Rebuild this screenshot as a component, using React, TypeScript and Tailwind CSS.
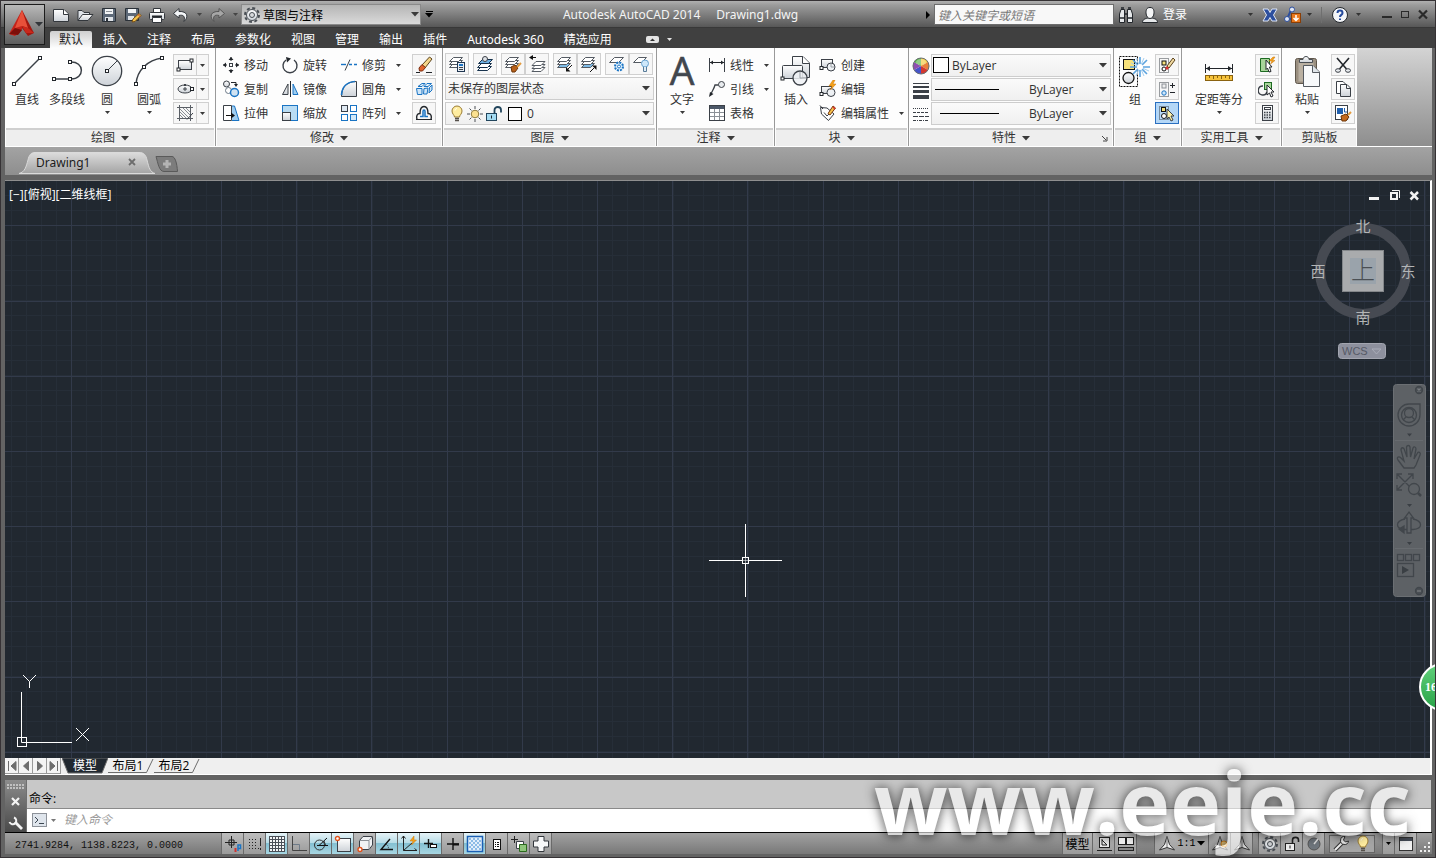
import type { ReactNode } from "react";
import clsx from "clsx";

type IconProps = { w?: number; h?: number; children: ReactNode };

// Base wrapper for every hand drawn icon
function Svg({ w = 18, h = 18, children }: IconProps) {
  return (
    <svg
      width={w}
      height={h}
      viewBox={`0 0 ${w} ${h}`}
      fill="none"
      stroke="#3b4047"
      className="shrink-0"
      aria-hidden="true"
    >
      {children}
    </svg>
  );
}

function Node({ x, y }: { x: number; y: number }) {
  return <rect x={x - 1.5} y={y - 1.5} width="3" height="3" fill="#fff" stroke="#22262b" />;
}

function Caret({ big = false, color = "#3a3a3a" }: { big?: boolean; color?: string }) {
  return big ? (
    <svg width="8" height="5" viewBox="0 0 8 5" className="shrink-0" aria-hidden="true">
      <path d="M0 0H8L4 4.5Z" fill={color} />
    </svg>
  ) : (
    <svg width="5" height="3" viewBox="0 0 5 3" className="shrink-0" aria-hidden="true">
      <path d="M0 0H5L2.5 3Z" fill={color} />
    </svg>
  );
}

// ================= QUICK ACCESS ICONS =================
const NewIcon = (
  <Svg>
    <path d="M1.5 3.5H12L16.5 8V15.5H1.5Z" fill="url(#face)" stroke="#33373c" />
    <path d="M11.5 3.5V8.5H16.5" fill="#fff" stroke="#33373c" />
  </Svg>
);
const OpenIcon = (
  <Svg>
    <path d="M2 14.5V4.5H6L8 6.5H13.5V8.5" fill="#dfe3e8" stroke="#33373c" />
    <path d="M2 14.5L6.5 8.5H17L12 14.5Z" fill="url(#face)" stroke="#33373c" />
  </Svg>
);
const SaveIcon = (
  <Svg>
    <path d="M2.5 2.5H15.5V15.5H2.5Z" fill="#5d6978" stroke="#2b3138" />
    <path d="M5 3H13V8H5Z" fill="#f2f4f6" stroke="none" />
    <path d="M6 5.5H12" stroke="#8b9096" />
    <path d="M5 11H13V15H5Z" fill="#dfe3e8" stroke="none" />
    <path d="M6 12H8V15H6Z" fill="#2b3138" stroke="none" />
  </Svg>
);
const SaveAsIcon = (
  <Svg>
    <path d="M1.5 2.5H14.5V14.5H1.5Z" fill="#5d6978" stroke="#2b3138" />
    <path d="M4 3H12V7H4Z" fill="#f2f4f6" stroke="none" />
    <path d="M4 10H10V14H4Z" fill="#dfe3e8" stroke="none" />
    <path d="M8 16L9 13L15 7.5L17 9.5L11 15.5Z" fill="#f5c24a" stroke="#7a5014" />
    <path d="M14 8.5L16 10.5" stroke="#c33" />
  </Svg>
);
const PrintIcon = (
  <Svg>
    <path d="M5.5 7V2.5H12.5V7" fill="#fff" stroke="#33373c" />
    <rect x="1.5" y="6.5" width="15" height="7" rx="1" fill="url(#face)" stroke="#33373c" />
    <path d="M4 10.5H14" stroke="#22262b" strokeWidth="2" />
    <path d="M4.5 11.5H13.5V16.5H4.5Z" fill="#fff" stroke="#33373c" />
  </Svg>
);
const UndoIcon = (
  <Svg>
    <path d="M7 2.5L1.5 7.5L7 12V9.5C11 8.5 13.5 10 12 15.5C17 11 15.5 5 7 5.5Z" fill="#f4f6f8" stroke="#33373c" />
  </Svg>
);
const RedoIcon = (
  <Svg>
    <path d="M11 2.5L16.5 7.5L11 12V9.5C7 8.5 4.5 10 6 15.5C1 11 2.5 5 11 5.5Z" fill="#a6a6a6" stroke="#555" />
  </Svg>
);
const GearIcon = (
  <Svg>
    <circle cx="9" cy="9" r="7" stroke="#4a4f55" strokeWidth="2" strokeDasharray="3 2.5" />
    <circle cx="9" cy="9" r="5.5" fill="url(#face)" stroke="#4a4f55" />
    <circle cx="9" cy="9" r="2.5" fill="#d8dadd" stroke="#4a4f55" />
  </Svg>
);

// ================= DRAW PANEL ICONS =================
const LineIcon = (
  <Svg w={32} h={32}>
    <path d="M3 29L29 3" stroke="#3b4047" strokeWidth="1.4" />
    <Node x={3} y={29} />
    <Node x={29} y={3} />
  </Svg>
);
const PolylineIcon = (
  <Svg w={32} h={32}>
    <path d="M3 24H20C34 24 34 6 19 7" strokeWidth="1.5" />
    <Node x={3} y={24} />
    <Node x={19} y={24} />
    <Node x={19} y={7} />
  </Svg>
);
const CircleIcon = (
  <Svg w={32} h={32}>
    <circle cx="16" cy="16" r="14.7" fill="url(#face)" strokeWidth="1.3" />
    <path d="M16 16L26 6" />
    <Node x={16} y={16} />
  </Svg>
);
const ArcIcon = (
  <Svg w={32} h={32}>
    <path d="M3 29C4 15 15 5 29 3" strokeWidth="1.5" />
    <Node x={3} y={29} />
    <Node x={11} y={12} />
    <Node x={29} y={3} />
  </Svg>
);
const RectIcon = (
  <Svg>
    <rect x="2.5" y="4.5" width="13" height="9" fill="url(#face)" />
    <Node x={2.5} y={13.5} />
    <Node x={15.5} y={4.5} />
  </Svg>
);
const EllipseIcon = (
  <Svg>
    <ellipse cx="9" cy="9" rx="7" ry="4" fill="url(#face)" />
    <path d="M9 7V11M7 9H11" />
    <Node x={16} y={9} />
    <path d="M8 5H10" strokeWidth="2" />
  </Svg>
);
const HatchIcon = (
  <Svg>
    <path d="M1 3.5H17M1 14.5H17M3.5 1V17M14.5 1V17" stroke="#5a5f66" />
    <path d="M4 5L13 14M4 8L10 14M4 11L7 14M7 4L14 11M10 4L14 8" stroke="#888d93" />
    <path d="M11 15.5L17 9" stroke="#3b4047" />
  </Svg>
);

// ================= MODIFY PANEL ICONS =================
const MoveIcon = (
  <Svg>
    <path d="M9 5V1M9 13V17M5 9H1M13 9H17" stroke="#22262b" />
    <path d="M6.5 4H11.5L9 1ZM6.5 14H11.5L9 17ZM4 6.5V11.5L1 9ZM14 6.5V11.5L17 9Z" fill="#22262b" stroke="none" />
    <rect x="7.5" y="7.5" width="3" height="3" fill="#fff" />
  </Svg>
);
const RotateIcon = (
  <Svg>
    <path d="M5 4A7 7 0 1 0 13 4" strokeWidth="1.4" />
    <path d="M5 1L10 2.5L6 6.5Z" fill="#22262b" stroke="none" />
  </Svg>
);
const TrimIcon = (
  <Svg>
    <path d="M1 8.5H6" stroke="#1a74c4" strokeWidth="1.4" />
    <path d="M10 3.5L5 14.5" />
    <path d="M9 8.5H12M14 8.5H17" stroke="#1a74c4" strokeWidth="1.4" />
  </Svg>
);
const CopyObjIcon = (
  <Svg>
    <circle cx="4.5" cy="4" r="3" fill="url(#face)" />
    <circle cx="6.5" cy="10.5" r="3" fill="#fff" stroke="#6d7a88" />
    <circle cx="12.5" cy="12.5" r="4" fill="#cfe2f2" stroke="#1a74c4" strokeWidth="1.5" />
    <path d="M9 2.5H14V5" stroke="#22262b" />
    <path d="M12 4H16L14 7Z" fill="#22262b" stroke="none" />
  </Svg>
);
const MirrorIcon = (
  <Svg>
    <path d="M9.5 1V17" stroke="#22262b" />
    <path d="M7 4L1.5 14.5H7Z" fill="url(#face)" />
    <path d="M12 4L17 14.5H12Z" fill="#9fcdf0" stroke="#1a74c4" />
  </Svg>
);
const FilletIcon = (
  <Svg>
    <path d="M1.5 16.5C1.5 7 7 1.5 16.5 1.5V16.5Z" fill="url(#face)" />
    <path d="M1.5 15C2 7 7 2 15 1.5" stroke="#1a74c4" strokeWidth="1.6" />
  </Svg>
);
const StretchIcon = (
  <Svg>
    <path d="M1.5 1.5H9.5V16.5H1.5Z" fill="#fff" />
    <path d="M10 2H12.5L17 16.5H10" fill="#9fcdf0" stroke="#1a74c4" />
    <path d="M4 11.5H11" stroke="#111" />
    <path d="M9 8.5L13 11.5L9 14.5Z" fill="#111" stroke="none" />
  </Svg>
);
const ScaleIcon = (
  <Svg>
    <rect x="1.5" y="1.5" width="15" height="15" fill="#b9dcf3" stroke="#1a74c4" />
    <rect x="1.5" y="8.5" width="8" height="8" fill="url(#face)" />
  </Svg>
);
const ArrayIcon = (
  <Svg>
    <rect x="1.5" y="1.5" width="6" height="6" fill="#dfe9f2" />
    <rect x="10.5" y="1.5" width="6" height="6" fill="#fff" stroke="#1a74c4" />
    <rect x="1.5" y="10.5" width="6" height="6" fill="#fff" stroke="#1a74c4" />
    <rect x="10.5" y="10.5" width="6" height="6" fill="#d2e8f8" stroke="#1a74c4" />
  </Svg>
);
const EraseIcon = (
  <Svg>
    <path d="M7 9L14.5 1L17 3L10 12Z" fill="#f5d68a" stroke="#5b431c" />
    <path d="M4 12L7 8.5L10.5 11.5L7.5 15L4.5 15Z" fill="#e0642c" stroke="#7a2d10" />
    <path d="M1 16.5H5M11 16.5H17" stroke="#22262b" />
  </Svg>
);
const ExplodeIcon = (
  <Svg>
    <path d="M1.5 8.5H7V14.5H2.5ZM9 8.5L13 8L12 14H8.5Z" fill="#cfe6f8" stroke="#1a74c4" />
    <path d="M3 6.5L7 3.5H10L7 6.5ZM9 6.5L12 3.5H16.5L13 6.5Z" fill="#e6f2fb" stroke="#1a74c4" />
    <path d="M14.5 7.5L17 5V10L14 13Z" fill="#cfe6f8" stroke="#1a74c4" />
  </Svg>
);
const OffsetIcon = (
  <Svg>
    <path d="M1 15.5H17" stroke="#22262b" />
    <path d="M2 15.5C1 12 2 9.5 5 9.5C5 4 7 2.5 9 2.5C11 2.5 13 4 13 9.5C16 9.5 17 12 16 15.5" stroke="#22262b" strokeWidth="1.4" />
    <path d="M5 12.5H8V7.5C8 5.5 10 5.5 10 7.5V12.5H13" stroke="#1a74c4" strokeWidth="1.5" />
  </Svg>
);

// ================= LAYER PANEL ICONS =================
function Stack({ blue = false }: { blue?: boolean }) {
  return (
    <g stroke="#555b63">
      <path d="M1.5 12.5L5.5 8.5H14.5L10.5 12.5Z" fill={blue ? "#7fbce8" : "#fff"} />
      <path d="M1.5 9.5L5.5 5.5H14.5L10.5 9.5Z" fill="#fff" />
      <path d="M1.5 6.5L5.5 2.5H14.5L10.5 6.5Z" fill="#fff" />
    </g>
  );
}
const LayerPropsIcon = (
  <Svg>
    <Stack />
    <rect x="9.5" y="7.5" width="7" height="9" fill="#e8eef4" stroke="#1f3550" />
    <path d="M11 10H15" stroke="#1a74c4" strokeWidth="2" />
    <path d="M11 12.5H15M11 14.5H15" stroke="#3b4047" />
  </Svg>
);
const LayerOffIcon = (
  <Svg>
    <path d="M1.5 15.5L5.5 11.5H15.5L11.5 15.5Z" fill="#fff" stroke="#17324d" />
    <path d="M1.5 12.5L5.5 8.5H15.5L11.5 12.5Z" fill="#fff" stroke="#17324d" />
    <path d="M2.5 8.5L6.5 4.5H16.5L12.5 8.5Z" fill="#6db0e4" stroke="#17324d" />
    <circle cx="9" cy="4" r="2.5" fill="#dfe3e8" />
  </Svg>
);
const LayerMatchIcon = (
  <Svg>
    <Stack />
    <path d="M7 12L11 10L14 13L11 17H8Z" fill="#b8611b" stroke="#6d3609" />
    <path d="M13 12L17 8" stroke="#e39a3d" strokeWidth="2" />
  </Svg>
);
const LayerPrevIcon = (
  <Svg>
    <g transform="translate(2.5 4)">
      <Stack />
    </g>
    <path d="M2 2.5H8" stroke="#111" />
    <path d="M1 2.5L5 0V5Z" fill="#111" stroke="none" />
  </Svg>
);
const LayerIsoIcon = (
  <Svg>
    <Stack blue />
    <path d="M16 10L12 14" stroke="#111" />
    <path d="M10 16.5V12L14.5 16.5Z" fill="#111" stroke="none" />
  </Svg>
);
const LayerUnisoIcon = (
  <Svg>
    <Stack blue />
    <path d="M10 17L14 13" stroke="#111" />
    <path d="M16.5 10.5V15L12 10.5Z" fill="#111" stroke="none" />
  </Svg>
);
const LayerFreezeIcon = (
  <Svg>
    <path d="M1.5 7.5L6.5 2.5H15.5L10.5 7.5Z" fill="#fff" stroke="#555b63" />
    <circle cx="11" cy="11.5" r="4" fill="#dff0fc" stroke="#1a74c4" strokeWidth="2" strokeDasharray="2 1.1" />
    <circle cx="11" cy="11.5" r="1.5" fill="#fff" stroke="#1a74c4" />
  </Svg>
);
const LayerBulbIcon = (
  <Svg>
    <path d="M1.5 7.5L6.5 2.5H14.5L9.5 7.5Z" fill="#fff" stroke="#555b63" />
    <circle cx="13" cy="8.5" r="3.5" fill="#cfe8fa" stroke="#6aa5d2" />
    <path d="M11.5 12V16.5H14.5V12" fill="#e2eef7" stroke="#5a7c98" />
  </Svg>
);
const BulbIcon = (
  <Svg>
    <path d="M6.5 12C6.5 10 4 9 4 6A5 5 0 0 1 14 6C14 9 11.5 10 11.5 12Z" fill="#ffedA0" stroke="#9a7b33" />
    <path d="M7 13.5H11M7 15.5H11" stroke="#55504a" strokeWidth="1.5" />
    <path d="M7 5.5C7 4.5 8 3.5 9 3.5" stroke="#fff" />
  </Svg>
);
const SunIcon = (
  <Svg>
    <path d="M9 1V17M1 9H17M3.5 3.5L14.5 14.5M14.5 3.5L3.5 14.5" stroke="#4a4f55" />
    <circle cx="9" cy="9" r="5" fill="#fff" stroke="none" />
    <circle cx="9" cy="9" r="3.8" fill="#fbe191" stroke="#8d7a3e" />
  </Svg>
);
const LockIcon = (
  <Svg>
    <rect x="1.5" y="8.5" width="10" height="7" fill="#a5dcf3" stroke="#22455c" />
    <path d="M9.5 8V5C9.5 1 16 1 16 5V7.5" stroke="#22455c" strokeWidth="1.8" />
    <path d="M6.5 10.5V13.5" stroke="#22262b" />
  </Svg>
);

// ================= ANNOTATION / BLOCK ICONS =================
const TextIcon = (
  <Svg w={32} h={32}>
    <text x="16" y="30" fontSize="39" textAnchor="middle" fill="#41464d" stroke="#41464d" strokeWidth="0.6">
      A
    </text>
  </Svg>
);
const LinearIcon = (
  <Svg>
    <path d="M1.5 2V16M16.5 2V16" />
    <path d="M2 6.5H16" stroke="#22262b" />
    <path d="M2 6.5L5 4.5V8.5ZM16 6.5L13 4.5V8.5Z" fill="#22262b" stroke="none" />
  </Svg>
);
const LeaderIcon = (
  <Svg>
    <circle cx="13.5" cy="4.5" r="3" fill="#e8ebee" />
    <path d="M10.5 5H7C6 9 4 11 3 14" strokeWidth="1.3" />
    <path d="M1 17L2 12L5.5 14Z" fill="#22262b" stroke="none" />
  </Svg>
);
const TableIcon = (
  <Svg>
    <rect x="1.5" y="1.5" width="15" height="15" fill="#fff" />
    <path d="M2 3.5H16" stroke="#4c5868" strokeWidth="3" />
    <path d="M2 8.5H16M2 12.5H16M6.5 5V16M11.5 5V16" stroke="#8b9096" />
  </Svg>
);
const InsertIcon = (
  <Svg w={32} h={32}>
    <path d="M12.5 1.5H23L29.5 8V22.5H12.5Z" fill="url(#face)" />
    <path d="M22.5 1.5V8.5H29.5" fill="#fff" />
    <rect x="2.5" y="10.5" width="20" height="13" rx="1" fill="url(#face)" />
    <circle cx="20" cy="23" r="7" fill="#eef1f4" fillOpacity="0.85" strokeWidth="1.3" />
    <path d="M20 17V23H26" stroke="#9aa0a6" />
    <Node x={2.5} y={23.5} />
  </Svg>
);
const CreateIcon = (
  <Svg>
    <rect x="2.5" y="3.5" width="11" height="8" fill="url(#face)" />
    <circle cx="12" cy="11" r="4" fill="#eef1f4" />
    <path d="M12 8V11H15" stroke="#9aa0a6" />
    <Node x={2.5} y={12} />
  </Svg>
);
const EditIcon = (
  <Svg>
    <rect x="2.5" y="6.5" width="10" height="7" fill="url(#face)" />
    <circle cx="12" cy="12.5" r="4" fill="#eef1f4" />
    <Node x={2.5} y={14} />
    <path d="M14 0L10 6H13L11.5 10L17 4H14L16 0Z" fill="#f6a21a" stroke="#c9740a" strokeWidth="0.5" />
  </Svg>
);
const EditAttrIcon = (
  <Svg>
    <path d="M1.5 3.5L8 4L15 10L9.5 16.5L2.5 10Z" fill="#fff" />
    <path d="M5 8.5L8 12L10 10" />
    <path d="M1 1.5L4 5" stroke="#22262b" />
    <path d="M9 9.5L14 2L16.5 4L11 11Z" fill="#f5c24a" stroke="#7a3a14" />
    <path d="M14 3L16 5" stroke="#d33" strokeWidth="1.5" />
  </Svg>
);

// ================= PROPERTIES ICONS =================
const ColorIcon = (
  <Svg>
    <g stroke="none">
      <path d="M9 9V1A8 8 0 0 1 16 5Z" fill="#f3c93b" />
      <path d="M9 9L16 5A8 8 0 0 1 16 13Z" fill="#e9803a" />
      <path d="M9 9L16 13A8 8 0 0 1 9 17Z" fill="#d4372f" />
      <path d="M9 9V17A8 8 0 0 1 2 13Z" fill="#4654c9" />
      <path d="M9 9L2 13A8 8 0 0 1 2 5Z" fill="#8f4fb0" />
      <path d="M9 9L2 5A8 8 0 0 1 9 1Z" fill="#59b04a" />
    </g>
    <circle cx="9" cy="9" r="8" stroke="#6a6f75" />
    <ellipse cx="9" cy="5" rx="5" ry="3" fill="#fff" fillOpacity="0.35" stroke="none" />
  </Svg>
);
const WeightIcon = (
  <Svg>
    <path d="M1 1.5H17" />
    <path d="M1 5H17" strokeWidth="2" />
    <path d="M1 9.5H17" strokeWidth="3" />
    <path d="M1 15H17" strokeWidth="4" />
  </Svg>
);
const LinetypeIcon = (
  <Svg>
    <path d="M1 1.5H17" strokeDasharray="1 1" />
    <path d="M1 5.5H17" strokeDasharray="3 1" />
    <path d="M1 9.5H17" strokeDasharray="5 1" />
    <path d="M1 13.5H17" strokeDasharray="3 1 1 1" />
  </Svg>
);

// ================= GROUP / UTILITIES / CLIPBOARD ICONS =================
const GroupIcon = (
  <Svg w={32} h={32}>
    <rect x="0.5" y="1.5" width="18" height="30" stroke="#111" strokeDasharray="2 1" />
    <rect x="4.5" y="4.5" width="11" height="10" fill="#f7e27c" stroke="#111" />
    <circle cx="9.5" cy="23" r="5.5" fill="url(#face)" stroke="#111" strokeWidth="1.3" />
    <path d="M21 2V22M11 12H31M14 5L28 19M28 5L14 19" stroke="#5ba3de" strokeWidth="1.6" />
    <path d="M17 3L25 21M12 8L30 16M25 3L17 21" stroke="#a3cff2" />
    <circle cx="21" cy="12" r="3" fill="#fff" stroke="none" />
  </Svg>
);
const UngroupIcon = (
  <Svg>
    <rect x="1.5" y="2.5" width="9" height="14" strokeDasharray="1 1" />
    <rect x="4" y="5" width="4" height="4" fill="#f7e27c" stroke="#111" />
    <circle cx="6" cy="13" r="2" fill="#fff" stroke="#111" />
    <path d="M9 10L15 2L17 4L11 12Z" fill="#f0d9a0" stroke="#5b431c" />
    <path d="M8 11L10 13" stroke="#d33" strokeWidth="2.5" />
  </Svg>
);
const GroupEditIcon = (
  <Svg>
    <rect x="1.5" y="2.5" width="9" height="14" strokeDasharray="1 1" />
    <rect x="4" y="4" width="4" height="4" fill="#eee" stroke="#8b9096" />
    <circle cx="6" cy="13" r="2.2" fill="#cfe6f8" stroke="#1a74c4" />
    <path d="M12 5.5H17M14.5 3V8M12 12.5H17" stroke="#22262b" />
  </Svg>
);
const GroupSelectIcon = (
  <Svg>
    <rect x="1.5" y="2.5" width="9" height="13" strokeDasharray="1 1" />
    <rect x="3.5" y="3.5" width="4" height="4" fill="#f7e27c" stroke="#111" />
    <circle cx="6" cy="12" r="2.5" fill="#fff" stroke="#111" />
    <path d="M9 5L16 12H13L15 16L13 17L11 13L9 15Z" fill="#fbf0a8" stroke="#3b4047" />
  </Svg>
);
const MeasureIcon = (
  <Svg w={32} h={32}>
    <path d="M2.5 9V18M29.5 9V18M3 13.5H29" stroke="#22262b" />
    <path d="M3 13.5L7 11V16ZM29 13.5L25 11V16Z" fill="#22262b" stroke="none" />
    <rect x="2.5" y="20.5" width="27" height="5" fill="#f6c33c" stroke="#8a6210" />
    <path d="M6.5 21V23M10.5 21V24M14.5 21V23M18.5 21V24M22.5 21V23M26.5 21V24" stroke="#8a6210" />
  </Svg>
);
const QuickSelectIcon = (
  <Svg>
    <path d="M2.5 2.5H11.5V15.5H2.5Z" fill="#a8d59a" stroke="#1d6b22" />
    <path d="M8 4L14 11H11.5L13 15.5L11 16L9.5 12L8 13.5Z" fill="#fff" stroke="#22262b" />
    <path d="M15 1L11 5H14L12.5 8L17 4.5H14.5L17 1Z" fill="#f6a21a" stroke="#c9740a" strokeWidth="0.5" />
  </Svg>
);
const SelectSimilarIcon = (
  <Svg>
    <path d="M5 6A4.5 4.5 0 1 0 9 12" strokeWidth="1.4" />
    <rect x="6.5" y="2.5" width="7" height="7" fill="#a8d59a" stroke="#1d6b22" />
    <path d="M9 5L16 12H13L15 16L13 17L11.5 13L9 15Z" fill="#fff" stroke="#22262b" />
  </Svg>
);
const CalcIcon = (
  <Svg>
    <rect x="4.5" y="1.5" width="10" height="15" fill="url(#face)" />
    <rect x="6.5" y="3.5" width="6" height="2" fill="#fff" />
    <path d="M6 8.5H13M6 11H13M6 13.5H13" strokeDasharray="1.5 1" strokeWidth="1.4" />
  </Svg>
);
const PasteIcon = (
  <Svg w={32} h={32}>
    <rect x="4.5" y="3.5" width="21" height="25" rx="2" fill="#9a8f80" stroke="#5f574c" />
    <rect x="7.5" y="7.5" width="15" height="19" fill="#b9b0a2" stroke="none" />
    <path d="M8.5 7.5V4.5H12C12 0.5 18 0.5 18 4.5H21.5V7.5Z" fill="url(#face)" stroke="#4a4f55" />
    <path d="M12.5 10.5H22L28.5 17V31.5H12.5Z" fill="#f7f9fb" stroke="#555a61" />
    <path d="M21.5 10.5V17.5H28.5" fill="#dfe5ea" stroke="#555a61" />
  </Svg>
);
const CutIcon = (
  <Svg>
    <path d="M3 2L12.5 13M15 2L5.5 13" stroke="#22262b" strokeWidth="1.6" />
    <ellipse cx="4" cy="14.5" rx="2.5" ry="1.8" fill="#e8ebee" />
    <ellipse cx="14" cy="14.5" rx="2.5" ry="1.8" fill="#e8ebee" />
  </Svg>
);
const CopyIcon = (
  <Svg>
    <path d="M2.5 1.5H9L12.5 5V13.5H2.5Z" fill="#fff" />
    <path d="M6.5 4.5H13L16.5 8V16.5H6.5Z" fill="url(#face)" />
    <path d="M12.5 4.5V8.5H16.5" />
  </Svg>
);
const MatchIcon = (
  <Svg>
    <rect x="1.5" y="1.5" width="12" height="14" fill="#fff" />
    <rect x="3" y="4" width="6" height="6" fill="#1f5fae" stroke="none" />
    <path d="M10.5 4V8H13" stroke="#1f5fae" />
    <path d="M7 12L12 10L15 13L12 17H8Z" fill="#c46a1e" stroke="#6d3609" />
    <path d="M14 11L17 8" stroke="#e39a3d" strokeWidth="2" />
  </Svg>
);

// ================= RIBBON PARTS =================
function Panel({
  title,
  caret = true,
  last = false,
  launcher = false,
  className,
  children,
}: {
  title: string;
  caret?: boolean;
  last?: boolean;
  launcher?: boolean;
  className?: string;
  children: ReactNode;
}) {
  return (
    <section className={clsx("flex flex-col bg-[#fdfdfd] shrink-0", !last && "border-r border-[#999]")}>
      <div className={clsx("flex items-start h-[80px] pt-[5px]", className)}>{children}</div>
      <button className="relative mx-px h-[18px] flex items-center justify-center gap-[6px] bg-[#eeeeee] border-t-2 border-[#cfcfcf]">
        {title}
        {caret && <Caret big />}
        {launcher && (
          <span className="absolute right-1 top-[5px]">
            <Svg w={7} h={7}>
              <path d="M1 1L5 5M6 2V6H2" stroke="#444" />
            </Svg>
          </span>
        )}
      </button>
    </section>
  );
}

function BigButton({ icon, label, caret, className }: { icon: ReactNode; label: string; caret?: boolean; className: string }) {
  return (
    <button className={clsx("flex flex-col items-center h-[72px] pt-[2px] shrink-0", className)}>
      {icon}
      <span className="mt-[5px] whitespace-nowrap">{label}</span>
      {caret && (
        <span className="mt-[3px] h-[3px] flex">
          <Caret />
        </span>
      )}
    </button>
  );
}

function SmallButton({ icon, label, caret }: { icon: ReactNode; label: string; caret?: boolean }) {
  return (
    <button className="flex items-center gap-1 h-6 w-full whitespace-nowrap">
      {icon}
      <span className="pt-[2px]">{label}</span>
      {caret && (
        <span className="ml-[6px]">
          <Caret />
        </span>
      )}
    </button>
  );
}

function IconButton({ icon, label, active = false }: { icon: ReactNode; label: string; active?: boolean }) {
  return (
    <button
      aria-label={label}
      className={clsx(
        "flex items-center justify-center w-6 h-[22px] border",
        active ? "bg-[#b4d7f7] border-[#2a6fc0]" : "bg-[#f7f7f7] border-[#d0d0d0]"
      )}
    >
      {icon}
    </button>
  );
}

function SplitButton({ icon, label }: { icon: ReactNode; label: string }) {
  return (
    <div className="flex h-[22px]">
      <IconButton icon={icon} label={label} />
      <button aria-label={`${label}选项`} className="w-3 flex items-center justify-center border border-l-0 border-[#d0d0d0] bg-[#f7f7f7]">
        <Caret />
      </button>
    </div>
  );
}

function Combo({ label, value, className, children }: { label: string; value: string; className: string; children?: ReactNode }) {
  return (
    <div className="relative w-full">
      <select
        aria-label={label}
        className={clsx(
          "block appearance-none w-full h-[23px] border border-[#cdcdcd] bg-linear-to-b from-[#fafafa] to-[#f0f0f0] leading-4",
          className
        )}
      >
        <option>{value}</option>
      </select>
      <span className="absolute right-1 top-[9px] pointer-events-none flex">
        <Caret big />
      </span>
      {children}
    </div>
  );
}

const tabs = ["插入", "注释", "布局", "参数化", "视图", "管理", "输出", "插件", "Autodesk 360", "精选应用"];

const quickAccess = [
  { label: "新建", icon: NewIcon },
  { label: "打开", icon: OpenIcon },
  { label: "保存", icon: SaveIcon },
  { label: "另存为", icon: SaveAsIcon },
  { label: "打印", icon: PrintIcon },
];

function Header() {
  return (
    <header className="flex h-[47px] text-white bg-[linear-gradient(to_bottom,#b0b0b0_0px,#9c9c9c_4px,#575757_26px,#303030_26px,#404040_27px)] font-['Noto_Sans','Noto_Sans_CJK_SC',sans-serif]">
      <button
        aria-label="应用程序菜单"
        className="mt-[3px] ml-[3px] w-[41px] h-[41px] shrink-0 border border-[#1c1c1c] bg-linear-to-b from-[#b9b9b9] to-[#5e5e5e] flex items-center pl-1"
      >
        <svg width="26" height="30" viewBox="0 0 26 30" className="shrink-0" aria-hidden="true">
          <path d="M13 0L0 24L6 26L13 20Z" fill="#c4231a" />
          <path d="M13 0L25 23L19 26L13 18Z" fill="#a3170f" />
          <path d="M13 0L6 18L13 16L19 18Z" fill="#e8503a" />
          <path d="M6 18L0 24L9 25L13 20Z" fill="#7d0e09" />
          <path d="M13 16L19 18L25 23L17 23Z" fill="#c9281b" />
        </svg>
        <Caret big color="#33363a" />
      </button>

      <div className="flex-1 min-w-0 ml-1 flex flex-col">
        {/* Title bar */}
        <div className="flex items-center h-[27px] shrink-0">
          <div className="flex items-center">
            {quickAccess.map((item) => (
              <button key={item.label} aria-label={item.label} className="w-6 h-6 flex items-center justify-center">
                {item.icon}
              </button>
            ))}
            <button aria-label="放弃" className="w-6 flex justify-center">{UndoIcon}</button>
            <button aria-label="放弃列表" className="w-3 flex justify-center"><Caret color="#444" /></button>
            <button aria-label="重做" className="w-6 flex justify-center">{RedoIcon}</button>
            <button aria-label="重做列表" className="w-3 flex justify-center"><Caret color="#444" /></button>
            <div className="relative w-[180px]">
              <select aria-label="工作空间" className="block appearance-none w-full h-[21px] pl-[21px] pt-[2px] leading-4 border border-[#8a8a8a] bg-linear-to-b from-[#b5b5b5] to-[#dadada] text-black">
                <option>草图与注释</option>
              </select>
              <span className="absolute left-[2px] top-[2px] pointer-events-none">{GearIcon}</span>
              <span className="absolute right-[2px] top-2 pointer-events-none flex"><Caret big /></span>
            </div>
            <button aria-label="自定义快速访问工具栏" className="w-4 flex flex-col items-center gap-px">
              <span className="w-[7px] h-px bg-black" />
              <Caret big color="#000" />
            </button>
          </div>

          <h1 className="flex-1 flex justify-center gap-4 whitespace-nowrap text-[#f4f4f4]">
            <span>Autodesk AutoCAD 2014</span>
            <span>Drawing1.dwg</span>
          </h1>

          <div className="flex items-center shrink-0">
            <svg width="10" height="8" viewBox="0 0 10 8" aria-hidden="true">
              <path d="M2 0L6 4L2 8Z" fill="#000" />
            </svg>
            <input
              aria-label="搜索"
              placeholder="键入关键字或短语"
              className="w-[180px] h-[21px] px-[3px] pt-[2px] bg-[#f8f8f8] border border-[#6d6d6d] text-black italic placeholder:text-[#777]"
            />
            <button aria-label="搜索按钮" className="w-6 flex justify-center">
              <Svg>
                <path d="M2.5 16.5V8L4 3.5H7.5V16.5ZM15.5 16.5V8L14 3.5H10.5V16.5Z" fill="#e6e8ea" stroke="#22262b" />
                <path d="M4 2H7M11 2H14M7.5 8H10.5M2.5 12H7M11 12H15.5" stroke="#22262b" strokeWidth="1.5" />
              </Svg>
            </button>
            <button className="flex items-center gap-1 ml-[3px]">
              <Svg>
                <path d="M1.5 16.5C1.5 13 5 12.5 7 12H11C13 12.5 16.5 13 16.5 16.5Z" fill="#e6e8ea" stroke="#22262b" />
                <path d="M9 1.5C5 1.5 5 5 5 7C5 10 7 12.5 9 12.5C11 12.5 13 10 13 7C13 5 13 1.5 9 1.5Z" fill="#f4f5f6" stroke="#22262b" />
              </Svg>
              登录
              <span className="ml-[57px] mr-[5px]"><Caret color="#333" /></span>
            </button>
            <button aria-label="Exchange" className="w-6 flex justify-center">
              <Svg>
                <path d="M2 3H7L9 6.5L11 3H16L12.5 9L16 15H11L9 11.5L7 15H2L5.5 9Z" fill="#2d4f9e" stroke="#dfe6f5" />
              </Svg>
            </button>
            <button aria-label="保持连接" className="w-5 ml-px flex justify-center">
              <Svg>
                <path d="M8 2L3 13H9" stroke="#2d4f9e" strokeWidth="2" />
                <circle cx="8" cy="3.5" r="2.5" fill="#dfe6f5" stroke="#2d4f9e" />
                <circle cx="3" cy="13" r="2.5" fill="#dfe6f5" stroke="#2d4f9e" />
                <rect x="7.5" y="7.5" width="9" height="9" fill="#e8781c" stroke="#8a3e06" />
                <path d="M12 9V14M9.5 12L12 14.5L14.5 12" stroke="#fff" strokeWidth="1.5" />
              </Svg>
            </button>
            <span className="w-3 flex justify-center"><Caret color="#333" /></span>
            <span className="mx-[6px] w-px h-4 bg-[#6f6f6f]" />
            <button aria-label="帮助" className="w-6 flex justify-center">
              <Svg>
                <circle cx="9" cy="9" r="7.5" fill="#f3f5f8" stroke="#22262b" />
                <path d="M6.5 7C6.5 3.8 11.5 3.8 11.5 7C11.5 9 9 8.8 9 11M9 12.5V14" stroke="#24499c" strokeWidth="2" />
              </Svg>
            </button>
            <span className="w-3 flex justify-center"><Caret color="#333" /></span>
            <button aria-label="最小化" className="ml-[14px] w-[18px]">
              <Svg><path d="M4 11H14" stroke="#2a2a2a" strokeWidth="2" /></Svg>
            </button>
            <button aria-label="最大化" className="w-[18px]">
              <Svg><rect x="5.5" y="5.5" width="7" height="6" stroke="#2a2a2a" /></Svg>
            </button>
            <button aria-label="关闭" className="w-[18px] mr-[3px]">
              <Svg><path d="M5 4.5L13 12.5M13 4.5L5 12.5" stroke="#2a2a2a" strokeWidth="2.2" /></Svg>
            </button>
          </div>
        </div>

        {/* Ribbon tabs */}
        <nav className="flex items-end flex-1 pl-px">
          <button className="h-[17px] px-[9px] mr-px leading-4 rounded-t-xs bg-linear-to-b from-[#cfcfcf] to-[#fdfdfd] text-[#222] flex items-center">默认</button>
          {tabs.map((tab) => (
            <button key={tab} className="h-[17px] px-[10px] leading-4 flex items-center whitespace-nowrap">{tab}</button>
          ))}
          <button aria-label="最小化功能区" className="ml-6 h-[17px] flex items-center gap-2">
            <svg width="13" height="7" viewBox="0 0 13 7" aria-hidden="true">
              <rect width="13" height="7" rx="2" fill="#e4e4e4" />
              <path d="M4 5H9L6.5 2.5Z" fill="#333" />
            </svg>
            <Caret color="#e4e4e4" />
          </button>
        </nav>
      </div>
    </header>
  );
}

function Ribbon() {
  return (
    <div className="flex h-[99px] shrink-0 border-b border-white bg-linear-to-b from-[#d4d4d4] to-[#8e8e8e] overflow-hidden">
      <Panel title="绘图" className="pl-[2px] pr-[6px]">
        <BigButton icon={LineIcon} label="直线" className="w-10" />
        <BigButton icon={PolylineIcon} label="多段线" className="w-10" />
        <BigButton icon={CircleIcon} label="圆" caret className="w-10" />
        <BigButton icon={ArcIcon} label="圆弧" caret className="w-11" />
        <div className="flex flex-col gap-[2px] ml-[2px] pt-px">
          <SplitButton icon={RectIcon} label="矩形" />
          <SplitButton icon={EllipseIcon} label="椭圆" />
          <SplitButton icon={HatchIcon} label="图案填充" />
        </div>
      </Panel>

      <Panel title="修改" className="px-[6px]">
        <div className="w-[59px]">
          <SmallButton icon={MoveIcon} label="移动" />
          <SmallButton icon={CopyObjIcon} label="复制" />
          <SmallButton icon={StretchIcon} label="拉伸" />
        </div>
        <div className="w-[59px]">
          <SmallButton icon={RotateIcon} label="旋转" />
          <SmallButton icon={MirrorIcon} label="镜像" />
          <SmallButton icon={ScaleIcon} label="缩放" />
        </div>
        <div className="w-[72px]">
          <SmallButton icon={TrimIcon} label="修剪" caret />
          <SmallButton icon={FilletIcon} label="圆角" caret />
          <SmallButton icon={ArrayIcon} label="阵列" caret />
        </div>
        <div className="flex flex-col gap-[2px] pt-px">
          <IconButton icon={EraseIcon} label="删除" />
          <IconButton icon={ExplodeIcon} label="分解" />
          <IconButton icon={OffsetIcon} label="偏移" />
        </div>
      </Panel>

      <Panel title="图层" className="px-[2px]">
        <div className="w-[209px] flex flex-col gap-[2px]">
          <div className="flex gap-1">
            <IconButton icon={LayerPropsIcon} label="图层特性" />
            <IconButton icon={LayerOffIcon} label="置为当前" />
            <div className="flex">
              <IconButton icon={LayerMatchIcon} label="匹配图层" />
              <IconButton icon={LayerPrevIcon} label="上一个图层" />
            </div>
            <div className="flex">
              <IconButton icon={LayerIsoIcon} label="隔离" />
              <IconButton icon={LayerUnisoIcon} label="取消隔离" />
            </div>
            <div className="flex">
              <IconButton icon={LayerFreezeIcon} label="冻结" />
              <IconButton icon={LayerBulbIcon} label="关闭图层" />
            </div>
          </div>
          <Combo label="图层状态" value="未保存的图层状态" className="pl-[2px]" />
          <Combo label="图层" value="0" className="pl-[81px]">
            <span className="absolute left-[3px] top-[3px] flex items-center pointer-events-none">
              {BulbIcon}
              {SunIcon}
              <span className="ml-px">{LockIcon}</span>
              <span className="ml-[5px] w-[14px] h-[14px] bg-white border border-black" />
            </span>
          </Combo>
        </div>
      </Panel>

      <Panel title="注释" className="pl-1 pr-[6px]">
        <BigButton icon={TextIcon} label="文字" caret className="w-[42px]" />
        <div className="w-[60px] ml-[5px]">
          <SmallButton icon={LinearIcon} label="线性" caret />
          <SmallButton icon={LeaderIcon} label="引线" caret />
          <SmallButton icon={TableIcon} label="表格" />
        </div>
      </Panel>

      <Panel title="块" className="pl-px pr-[7px]">
        <BigButton icon={InsertIcon} label="插入" className="w-10" />
        <div className="w-[82px] ml-[3px]">
          <SmallButton icon={CreateIcon} label="创建" />
          <SmallButton icon={EditIcon} label="编辑" />
          <SmallButton icon={EditAttrIcon} label="编辑属性" caret />
        </div>
      </Panel>

      <Panel title="特性" launcher className="pl-[3px] pr-[2px]">
        <div className="flex flex-col gap-[7px] pt-1 mr-px">
          {ColorIcon}
          {WeightIcon}
          {LinetypeIcon}
        </div>
        <div className="w-[180px] flex flex-col gap-px pt-px">
          <Combo label="对象颜色" value="ByLayer" className="pl-5">
            <span className="absolute left-[2px] top-[3px] w-4 h-4 bg-white border border-black pointer-events-none" />
          </Combo>
          <Combo label="线宽" value="ByLayer" className="pl-[97px]">
            <span className="absolute left-1 top-[11px] w-16 h-px bg-black pointer-events-none" />
          </Combo>
          <Combo label="线型" value="ByLayer" className="pl-[97px]">
            <span className="absolute left-[9px] top-[11px] w-[59px] h-px bg-black pointer-events-none" />
          </Combo>
        </div>
      </Panel>

      <Panel title="组" className="pl-[4px] pr-[2px]">
        <BigButton icon={GroupIcon} label="组" className="w-[34px]" />
        <div className="flex flex-col gap-[2px] ml-[3px] pt-px">
          <IconButton icon={UngroupIcon} label="解除编组" />
          <IconButton icon={GroupEditIcon} label="组编辑" />
          <IconButton icon={GroupSelectIcon} label="启用组选择" active />
        </div>
      </Panel>

      <Panel title="实用工具" className="pl-2 pr-[2px]">
        <BigButton icon={MeasureIcon} label="定距等分" caret className="w-[58px]" />
        <div className="flex flex-col gap-[2px] ml-[7px] pt-px">
          <IconButton icon={QuickSelectIcon} label="快速选择" />
          <IconButton icon={SelectSimilarIcon} label="全部选择" />
          <IconButton icon={CalcIcon} label="快速计算器" />
        </div>
      </Panel>

      <Panel title="剪贴板" caret={false} last className="pl-1 pr-[2px]">
        <BigButton icon={PasteIcon} label="粘贴" caret className="w-[42px]" />
        <div className="flex flex-col gap-[2px] ml-[3px] pt-px">
          <IconButton icon={CutIcon} label="剪切" />
          <IconButton icon={CopyIcon} label="复制剪裁" />
          <IconButton icon={MatchIcon} label="特性匹配" />
        </div>
      </Panel>
    </div>
  );
}

function FileTabs() {
  return (
    <div className="flex items-end h-7 shrink-0 pl-[14px] pb-px bg-linear-to-b from-[#a3a3a3] to-[#8e8e8e]">
      <div className="relative w-[136px] h-[22px]">
        <svg width="136" height="22" viewBox="0 0 136 22" className="absolute inset-0" aria-hidden="true">
          <path d="M0 21.5C6 20 7 15 9 8C10 3 12 0.5 16 0.5H120C125 0.5 127 3 128 8C130 16 131 20 136 21.5Z" fill="url(#filetab)" stroke="#dadada" />
        </svg>
        <button className="relative pl-[17px] h-[22px] flex items-center text-[#1c1c1c] font-['Noto_Sans',sans-serif]">Drawing1</button>
        <button aria-label="关闭图形" className="absolute right-[18px] top-[5px]">
          <Svg w={10} h={10}>
            <path d="M2 2L8 8M8 2L2 8" stroke="#6d6d6d" strokeWidth="1.8" />
          </Svg>
        </button>
      </div>
      <button aria-label="新图形" className="mb-px">
        <svg width="24" height="18" viewBox="0 0 24 18" aria-hidden="true">
          <path d="M1 1.5H17C20 1.5 22 8 22.5 16.5H9C4 16.5 3 8 1 1.5Z" fill="#7c7c7c" stroke="#5a5a5a" />
          <path d="M12 5V13M8 9H16" stroke="#b4b4b4" strokeWidth="3" />
        </svg>
      </button>
    </div>
  );
}

// One pattern tile holds 5 major and 25 minor divisions
const minor = Array.from({ length: 25 }, (_, i) => Math.round(i * 15.04) + 0.5);
const majorX = [0.5, 75.5, 150.5, 225.5, 300.5];
const majorY = [0.5, 76.5, 151.5, 226.5, 301.5];

function Grid() {
  return (
    <svg className="absolute inset-0 w-full h-full" aria-hidden="true">
      <defs>
        <pattern id="grid" x="66" y="44" width="376" height="376" patternUnits="userSpaceOnUse">
          <path d={minor.map((v) => `M${v} 0V376M0 ${v}H376`).join("")} stroke="#262e38" />
          <path d={majorX.map((v) => `M${v} 0V376`).join("")} stroke="#323a4a" />
          <path d={majorY.map((v) => `M0 ${v}H376`).join("")} stroke="#323a4a" />
        </pattern>
      </defs>
      <rect width="100%" height="100%" fill="url(#grid)" />
    </svg>
  );
}

function ViewCube() {
  return (
    <svg
      width="112"
      height="148"
      viewBox="0 0 112 148"
      className="absolute right-[12px] top-[34px] font-['Noto_Sans_CJK_SC',sans-serif]"
      role="img"
      aria-label="ViewCube"
    >
      <circle cx="57" cy="56" r="43" fill="none" stroke="#464a52" strokeWidth="10" />
      <rect x="36.5" y="35.5" width="41" height="41" fill="#a9abad" stroke="#84878a" />
      <rect x="44" y="43" width="26" height="26" fill="#9aa3ab" />
      <g fill="#b3b5b6" fontSize="15" textAnchor="middle">
        <text x="57" y="17">北</text>
        <text x="57" y="108">南</text>
        <text x="12" y="62">西</text>
        <text x="102" y="62">东</text>
      </g>
      <text x="57" y="64" fontSize="24" textAnchor="middle" fill="#4a4f54" className="font-light">上</text>
      <rect x="32.5" y="128.5" width="47" height="15" rx="3" fill="#8d909d" stroke="#a3a6b0" />
      <text x="36" y="140" fontSize="11" fill="#565a66" className="font-['Liberation_Sans',sans-serif]">WCS</text>
      <path d="M66 134H75L70.5 139Z" fill="none" stroke="#a9acb8" />
    </svg>
  );
}

function NavBar() {
  return (
    <svg width="33" height="213" viewBox="0 0 33 213" className="absolute right-1 top-[203px]" role="img" aria-label="导航栏">
      <rect x="0.5" y="0.5" width="32" height="212" rx="3" fill="#5d6165" stroke="#6b6f73" />
      <g fill="none" stroke="#41464b" strokeWidth="1.3">
        <circle cx="26" cy="6" r="3.5" fill="#4a4f54" />
        <path d="M24.5 4.5L27.5 7.5M27.5 4.5L24.5 7.5" stroke="#777b7f" />
        <path d="M16 20H27V31A11 11 0 1 1 16 20Z" />
        <circle cx="16" cy="31" r="7.5" />
        <circle cx="16" cy="29" r="4.5" />
        <path d="M10 36L13 33M22 36L19 33" />
        <path d="M2 56.5H30" stroke="#676b6f" strokeWidth="1" />
        <path d="M11 84L5 76C3 73 6 72 8 74L11 77L8 66C8 63 11 63 11.5 66L14 73L13.5 63C14 61 16.5 61 17 63L17.5 73L20 64C21 62 23 63 23 65L21 75L24.5 69C26 67 28 69 27 71L23 81L21 84Z" />
        <path d="M4 90L20 106M20 90L4 106M4 95V90H9M15 90H20V95M4 101V106H9" />
        <circle cx="21" cy="105" r="5.5" fill="#5d6165" />
        <path d="M25 109L28 112" strokeWidth="2.5" />
        <path d="M12 135C2 137 2 145 12 145.5H20C30 145 30 137 20 135" />
        <path d="M14 149V134H11.5L16 128L20.5 134H18V149Z" fill="#5d6165" />
        <path d="M11 142L6 145L11 149Z" fill="#41464b" />
        <path d="M2 164.5H30" stroke="#676b6f" strokeWidth="1" />
        <rect x="4.5" y="170.5" width="6" height="6" />
        <rect x="12.5" y="170.5" width="6" height="6" />
        <rect x="20.5" y="170.5" width="6" height="6" />
        <rect x="4.5" y="179.5" width="16" height="13" />
        <circle cx="26" cy="207" r="3.5" fill="#4a4f54" />
        <path d="M24 207H28" stroke="#777b7f" />
      </g>
      <path d="M14 49.5H19L16.5 52.5ZM14 120H19L16.5 123ZM14 158H19L16.5 161ZM9 182V190L16 186Z" fill="#3a3f44" />
    </svg>
  );
}

function DrawingArea() {
  return (
    <div className="relative flex-1 min-h-[300px] overflow-hidden bg-[#212830] border-t border-r-2 border-t-[#8f8f8f] border-r-white">
      <Grid />
      <p className="absolute left-1 top-[6px] text-white leading-4">[−][俯视][二维线框]</p>

      <div className="absolute right-1 top-[6px] flex">
        <button aria-label="最小化图形" className="w-5">
          <Svg><path d="M3 11.5H13" stroke="#f2f2f2" strokeWidth="3" /></Svg>
        </button>
        <button aria-label="还原图形" className="w-5">
          <Svg>
            <path d="M6 3.5H13.5V11" stroke="#f2f2f2" />
            <rect x="5" y="6" width="6" height="6" stroke="#f2f2f2" strokeWidth="2" />
          </Svg>
        </button>
        <button aria-label="关闭图形窗口" className="w-5">
          <Svg><path d="M4.5 5L12 12.5M12 5L4.5 12.5" stroke="#f2f2f2" strokeWidth="2.5" /></Svg>
        </button>
      </div>

      <ViewCube />
      <NavBar />

      {/* Crosshair cursor */}
      <svg width="74" height="74" viewBox="0 0 74 74" className="absolute left-[704px] top-[343px]" stroke="#fff" fill="none" aria-hidden="true">
        <path d="M0 36.5H33M40 36.5H73M36.5 0V33M36.5 40V73" />
        <rect x="33.5" y="33.5" width="6" height="6" />
        <path d="M33 36.5H40M36.5 33V40" strokeOpacity="0.5" />
      </svg>

      {/* UCS icon */}
      <svg width="76" height="76" viewBox="0 0 76 76" className="absolute left-3 bottom-[10px]" stroke="#fff" fill="none" aria-hidden="true">
        <path d="M4.5 20V64M9 70.5H55" />
        <rect x="0.5" y="65.5" width="9" height="9" />
        <path d="M4.5 64V70.5H10" />
        <path d="M6 3L12.5 9.5L19 3M12.5 9.5V16M59 56L72 69M72 56L59 69" />
      </svg>
    </div>
  );
}

const layoutArrows = [
  { label: "第一个", d: "M3.5 2V12M11 2.5V11.5L6 7Z" },
  { label: "上一个", d: "M9.5 2.5V11.5L4.5 7Z" },
  { label: "下一个", d: "M4.5 2.5V11.5L9.5 7Z" },
  { label: "最后一个", d: "M10.5 2V12M3 2.5V11.5L8 7Z" },
];

function LayoutTabs() {
  return (
    <div className="flex h-[17px] shrink-0 bg-[#efefef] border-b border-white border-r-2 border-r-white">
      {layoutArrows.map((a) => (
        <button key={a.label} aria-label={a.label} className="w-[14px] border-r border-b border-[#9a9a9a] bg-[#f4f4f4]">
          <svg width="13" height="14" viewBox="0 0 13 14" fill="#6d6d6d" stroke="#6d6d6d" aria-hidden="true">
            <path d={a.d} />
          </svg>
        </button>
      ))}
      <div className="flex pl-px">
        <button className="relative w-[46px] text-white leading-4">
          <svg width="46" height="16" viewBox="0 0 46 16" className="absolute inset-0" aria-hidden="true">
            <path d="M0 0H46L40 15H6Z" fill="#212830" stroke="#6d6d6d" />
          </svg>
          <span className="relative">模型</span>
        </button>
        {["布局1", "布局2"].map((name) => (
          <button key={name} className="relative w-[46px] text-black leading-4 pr-[6px]">
            <svg width="48" height="16" viewBox="0 0 48 16" className="absolute inset-0" fill="none" aria-hidden="true">
              <path d="M-4 14.5H38.5L45 1" stroke="#6d6d6d" />
            </svg>
            <span className="relative">{name}</span>
          </button>
        ))}
      </div>
    </div>
  );
}

function CommandLine() {
  return (
    <div className="flex h-[52px] shrink-0 mr-px">
      <div className="w-[21px] flex flex-col items-center justify-between pt-1 pb-[2px] bg-linear-to-b from-[#8c8c8c] to-[#4a4a4a]">
        <svg width="18" height="5" viewBox="0 0 18 5" aria-hidden="true">
          <path d="M0 1H18M0 4H18" stroke="#c0c0c0" strokeWidth="2" strokeDasharray="2 1" />
        </svg>
        <button aria-label="关闭命令行">
          <Svg w={12} h={12}><path d="M2 1L9 8M9 1L2 8" stroke="#f4f4f4" strokeWidth="2.2" /></Svg>
        </button>
        <button aria-label="自定义">
          <Svg w={16} h={14}>
            <path d="M7 6L14 13" stroke="#f4f4f4" strokeWidth="2.8" />
            <path d="M6 1.5A3.5 3.5 0 1 1 1.5 6" stroke="#f4f4f4" strokeWidth="2" />
          </Svg>
        </button>
      </div>
      <div className="flex-1 flex flex-col border-l border-[#707070]">
        <p className="h-[29px] pt-[11px] px-[2px] bg-[#c8c8c8] border-b border-[#8a8a8a] text-black leading-4">命令:</p>
        <label className="flex-1 flex items-center bg-white pl-[5px] pb-px">
          <span className="w-[15px] h-[14px] bg-[#dfe5ec] border border-[#8d9299] flex">
            <Svg w={13} h={12}><path d="M2 3L5 6L2 9M6 9.5H11" stroke="#3b4650" /></Svg>
          </span>
          <span className="ml-1 mr-2"><Caret color="#777" /></span>
          <input aria-label="命令输入" placeholder="键入命令" className="flex-1 h-4 text-black italic placeholder:text-[#9a9a9a]" />
        </label>
      </div>
    </div>
  );
}

const statusToggles: { label: string; on: boolean; icon: ReactNode }[] = [
  {
    label: "推断约束",
    on: false,
    icon: <Svg><path d="M1 7.5H13M7.5 1V13M5 5H10V10H5Z" stroke="#222" /><path d="M11.5 17V13" stroke="#c33" strokeWidth="2" /><path d="M14 16V10H16.5V13.5H14" stroke="#1a74c4" strokeWidth="1.5" /></Svg>,
  },
  {
    label: "捕捉",
    on: false,
    icon: <Svg><path d="M3 4.5H12M3 7.5H12M3 10.5H12M3 13.5H15" stroke="#222" strokeDasharray="1 2" /><path d="M14.5 3V11M14.5 13V15" stroke="#222" /></Svg>,
  },
  {
    label: "栅格",
    on: true,
    icon: <Svg><path d="M1.5 1.5H16.5V16.5H1.5Z" fill="#f5f7f8" /><path d="M1.5 1.5H16.5V16.5H1.5ZM4.5 1V17M7.5 1V17M10.5 1V17M13.5 1V17M1 4.5H17M1 7.5H17M1 10.5H17M1 13.5H17" stroke="#4a5058" /></Svg>,
  },
  {
    label: "正交",
    on: false,
    icon: <Svg><path d="M2.5 1V15.5H17" stroke="#444" /><path d="M3 9.5H9.5V15" stroke="#6d7a88" /></Svg>,
  },
  {
    label: "极轴",
    on: true,
    icon: <Svg><circle cx="7.5" cy="10" r="5" stroke="#333" /><path d="M5 10.5H16M7 10.5L15 3" stroke="#111" /><path d="M12 6L13.5 10" stroke="#333" /></Svg>,
  },
  {
    label: "对象捕捉",
    on: true,
    icon: <Svg><rect x="3.5" y="3.5" width="13" height="13" fill="url(#face)" /><circle cx="3.5" cy="3.5" r="2" fill="#fff" stroke="#e0521c" strokeWidth="1.4" /></Svg>,
  },
  {
    label: "三维对象捕捉",
    on: false,
    icon: <Svg><path d="M3.5 5.5L7 1.5H16.5V10L13 14.5H3.5Z" fill="#f0f2f4" /><path d="M3.5 5.5H13L16.5 1.5M13 5.5V14.5" stroke="#8b9096" /><circle cx="4" cy="14.5" r="2" fill="#fff" stroke="#e0521c" strokeWidth="1.4" /></Svg>,
  },
  {
    label: "对象捕捉追踪",
    on: true,
    icon: <Svg><path d="M12 4L3 14.5H15" stroke="#111" strokeWidth="1.4" /><path d="M8 9C10 10 10.5 12 10.5 14" strokeDasharray="1 1" /></Svg>,
  },
  {
    label: "动态UCS",
    on: true,
    icon: <Svg><path d="M3.5 1V15.5H17M3.5 15.5L12 8M1.5 3.5L3.5 1L5.5 3.5M14.5 13.5L17 15.5" stroke="#222" /><path d="M14 1L10 6H13L11.5 10L16.5 5H14Z" fill="#f6a21a" stroke="#c9740a" strokeWidth="0.5" /></Svg>,
  },
  {
    label: "动态输入",
    on: true,
    icon: <Svg><path d="M2 8.5H11M6.5 4V13" stroke="#111" strokeWidth="1.4" /><rect x="8.5" y="9.5" width="6" height="3" fill="#fff" stroke="#111" /></Svg>,
  },
  {
    label: "线宽",
    on: false,
    icon: <Svg><path d="M3 9H15M9 3V15" stroke="#111" strokeWidth="1.4" /><path d="M9 9.5H15" stroke="#111" strokeWidth="2" /></Svg>,
  },
  {
    label: "透明度",
    on: true,
    icon: <Svg><rect x="1.5" y="1.5" width="15" height="15" fill="#e2effa" stroke="#1a5fb4" strokeWidth="1.5" /><path d="M3 4H15M3 8H15M3 12H15" stroke="#8cbbe6" strokeWidth="2" strokeDasharray="2 2" /><path d="M5 6H15M5 10H15M5 14H15" stroke="#8cbbe6" strokeWidth="2" strokeDasharray="2 2" /></Svg>,
  },
  {
    label: "快捷特性",
    on: false,
    icon: <Svg><rect x="5.5" y="4.5" width="7" height="10" fill="#fff" stroke="#111" /><path d="M7 7.5H8M9 7.5H11M7 9.5H8M9 9.5H11M7 11.5H8M9 11.5H11" stroke="#111" /></Svg>,
  },
  {
    label: "选择循环",
    on: false,
    icon: <Svg><path d="M1 4.5H8M4.5 1V8" stroke="#222" /><path d="M6.5 6.5H13.5V13.5H6.5Z" fill="#fff" /><path d="M9.5 9.5H16.5V16.5H9.5Z" fill="#8fc57c" stroke="#2a6a1d" /></Svg>,
  },
  {
    label: "注释监视器",
    on: false,
    icon: <Svg><path d="M6 1.5H12V6H16.5V12H12V16.5H6V12H1.5V6H6Z" fill="#f6f7f8" stroke="#33373c" /></Svg>,
  },
];

function Compass({ lamp = false }: { lamp?: boolean }) {
  return (
    <Svg>
      <path d="M9 1.5L6.5 9.5L1.5 15L9 12.5L16.5 15L11.5 9.5Z" fill="#f1f1f1" stroke="#333" />
      <path d="M9 2V12" stroke="#777" />
      {lamp && <circle cx="13" cy="9" r="3" fill="#ffd98a" stroke="#e8901c" />}
    </Svg>
  );
}

function StatusButton({ label, children, className = "w-[22px]" }: { label: string; children: ReactNode; className?: string }) {
  return (
    <button aria-label={label} className={clsx("flex items-center justify-center h-full border-l border-[#6a6a6a] bg-linear-to-b from-[#bdbdbd] to-[#9a9a9a] text-black", className)}>
      {children}
    </button>
  );
}

function StatusBar() {
  return (
    <footer className="flex h-[22px] shrink-0 border-t border-black bg-linear-to-b from-[#a2a2a2] to-[#787878]">
      <div className="w-[216px] pl-[10px] pt-1 flex items-center whitespace-pre text-[10px] text-[#111] font-['Liberation_Mono',monospace]">
        2741.9284, 1138.8223, 0.0000
      </div>
      {statusToggles.map((t) => (
        <button
          key={t.label}
          aria-label={t.label}
          aria-pressed={t.on}
          className={clsx(
            "w-[22px] flex items-center justify-center border-l border-[#6a6a6a]",
            t.on
              ? "bg-[linear-gradient(to_bottom,#e6f3f7_0%,#b4dbe6_50%,#84c0d2_50%,#a8d6e2_100%)]"
              : "bg-linear-to-b from-[#bdbdbd] to-[#9a9a9a]"
          )}
        >
          {t.icon}
        </button>
      ))}
      <div className="flex-1 border-l border-[#6a6a6a]" />
      <StatusButton label="模型空间" className="w-[30px]">
        <span className="pt-[2px]">模型</span>
      </StatusButton>
      <StatusButton label="布局">
        <Svg><rect x="4.5" y="2.5" width="10" height="10" fill="#eee" stroke="#222" /><path d="M7 4V10H12L7 5M2 15.5H17" stroke="#222" /></Svg>
      </StatusButton>
      <StatusButton label="快速查看">
        <Svg><rect x="1.5" y="2.5" width="7" height="7" fill="#eee" stroke="#222" /><rect x="9.5" y="2.5" width="7" height="7" fill="#eee" stroke="#222" /><rect x="1.5" y="12.5" width="15" height="3" fill="#888" stroke="#222" /></Svg>
      </StatusButton>
      <div className="w-[18px] border-l border-[#6a6a6a]" />
      <StatusButton label="注释比例" className="w-[54px] gap-px">
        <Compass />
        <span className="font-['Liberation_Mono',monospace] text-[10px]">1:1</span>
        <Caret big color="#000" />
      </StatusButton>
      <StatusButton label="注释可见性"><Compass lamp /></StatusButton>
      <StatusButton label="自动缩放"><Compass /></StatusButton>
      <div className="w-[6px] border-l border-[#6a6a6a]" />
      <StatusButton label="切换工作空间">{GearIcon}</StatusButton>
      <StatusButton label="锁定">
        <Svg><rect x="2.5" y="8.5" width="9" height="7" fill="#eee" stroke="#222" /><path d="M9.5 8V5C9.5 1.5 15.5 1.5 15.5 5V7" stroke="#222" strokeWidth="1.6" /><path d="M7 10.5V13.5" stroke="#222" /></Svg>
      </StatusButton>
      <StatusButton label="硬件加速">
        <Svg><circle cx="9" cy="9" r="6" fill="#6f767d" stroke="#555" /><path d="M9 9L13 4" stroke="#ddd" strokeWidth="1.5" /></Svg>
      </StatusButton>
      <div className="flex items-center pl-1 pr-[7px] border-l border-[#6a6a6a]">
        <div className="flex items-center justify-around w-[46px] h-[18px] border border-[#666] bg-[#a5a5a5]">
          <Svg>
            <path d="M3 15L11 7" stroke="#333" strokeWidth="4" />
            <path d="M3 15L11 7" stroke="#eee" strokeWidth="2" />
            <path d="M13 1.5A4 4 0 1 0 16.5 6L13.5 7L11.5 5Z" fill="#eee" stroke="#333" />
          </Svg>
          {BulbIcon}
        </div>
      </div>
      <StatusButton label="状态栏菜单" className="w-3"><Caret color="#000" /></StatusButton>
      <StatusButton label="全屏显示">
        <Svg><rect x="2.5" y="2.5" width="13" height="13" fill="#f1f1f1" stroke="#333" /><path d="M3 4.5H15" stroke="#444a55" strokeWidth="3" /></Svg>
      </StatusButton>
      <div className="w-4 flex items-end justify-end border-l border-[#6a6a6a]">
        <Svg w={14} h={14}><path d="M10 3H12M6 7H8M10 7H12M2 11H4M6 11H8M10 11H12" stroke="#eee" strokeWidth="2" /></Svg>
      </div>
    </footer>
  );
}

export default function App() {
  return (
    <div className="relative h-screen flex flex-col overflow-hidden bg-[#636363] border border-[#363235] pb-[3px] text-xs text-[#333] leading-4 font-['Open_Sans','Noto_Sans_CJK_SC',sans-serif]">
      {/* Shared gradients */}
      <svg className="absolute w-0 h-0" aria-hidden="true">
        <defs>
          <linearGradient id="face" x1="0" y1="0" x2="0" y2="1">
            <stop offset="0" stopColor="#ffffff" />
            <stop offset="1" stopColor="#cdd2d8" />
          </linearGradient>
          <linearGradient id="filetab" x1="0" y1="0" x2="0" y2="1">
            <stop offset="0" stopColor="#dcdcdc" />
            <stop offset="1" stopColor="#a4a4a4" />
          </linearGradient>
        </defs>
      </svg>

      <Header />
      <div className="flex-1 min-h-0 flex flex-col pl-1 pr-[3px]">
        <Ribbon />
        <FileTabs />
        <div className="h-[5px] shrink-0" />
        <DrawingArea />
        <LayoutTabs />
        <div className="h-[5px] shrink-0" />
        <CommandLine />
        <StatusBar />
      </div>

      {/* Floating score ball */}
      <div className="absolute -right-8 bottom-[146px] w-12 h-12 rounded-full border-2 border-white bg-linear-to-b from-[#5fd07a] to-[#27a348] text-white text-xs font-bold flex items-center pl-1 font-['Liberation_Serif',serif]">
        16
      </div>

      <p className="absolute right-6 bottom-[5px] text-[86px] leading-[100px] font-bold text-white opacity-60 pointer-events-none [text-shadow:0_0_12px_rgba(0,0,0,0.9),0_2px_10px_rgba(0,0,0,0.5)]">
        www.eeje.cc
      </p>
    </div>
  );
}
